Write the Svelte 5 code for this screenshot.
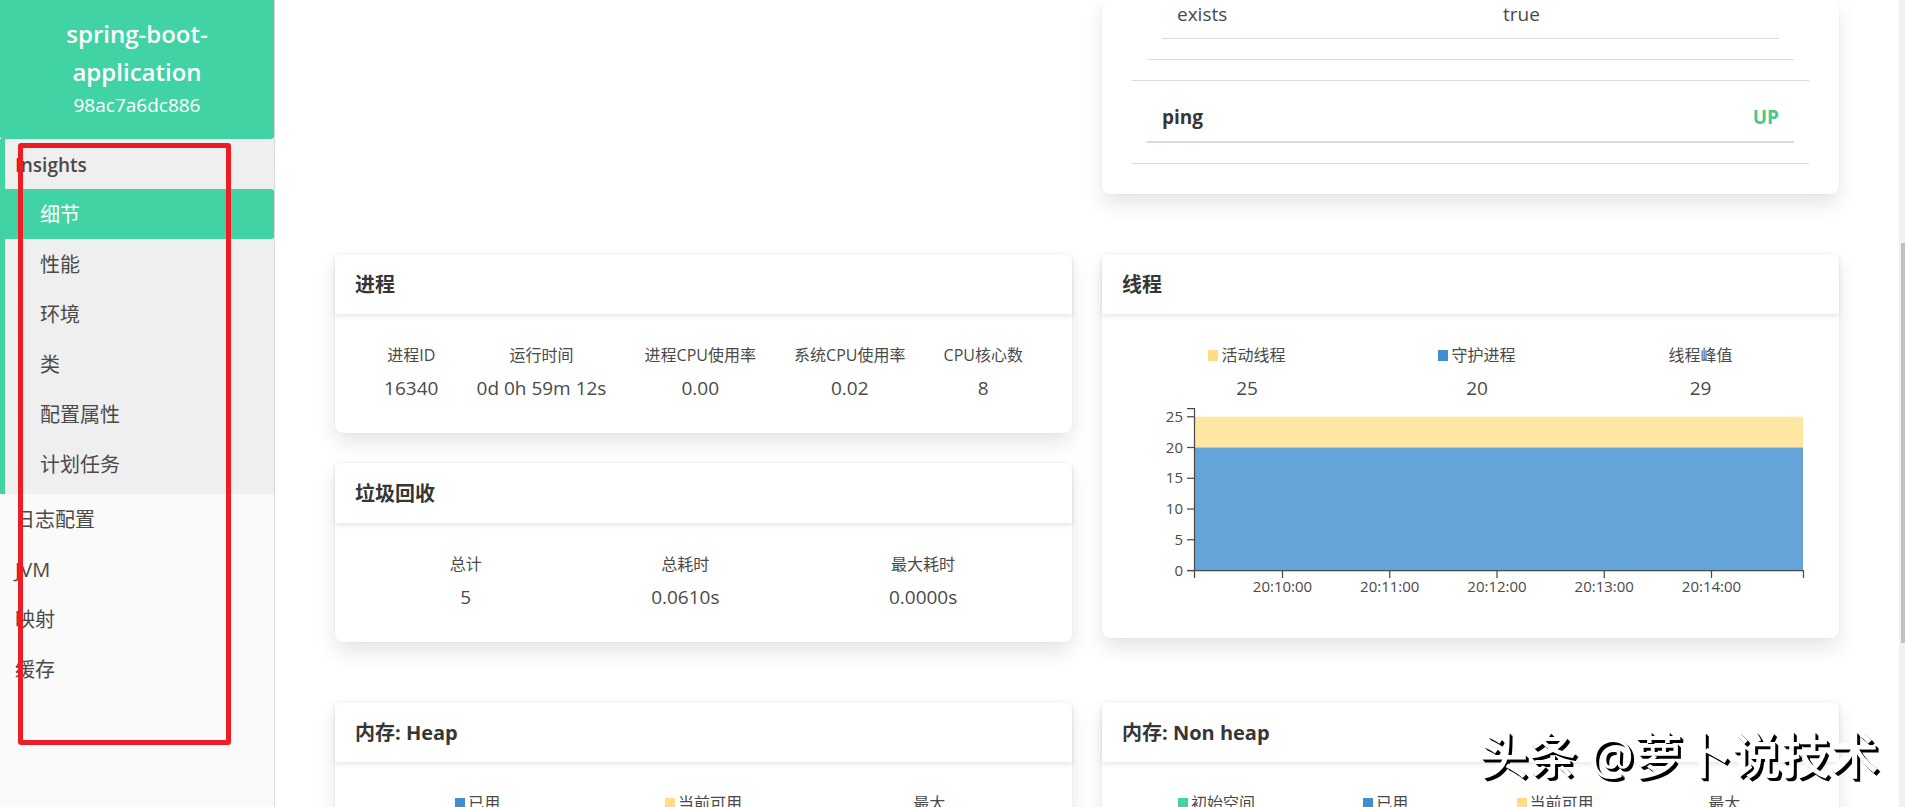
<script lang="ts">
  interface Stat {
    label: string;
    value?: string;
    color?: string;
  }

  const links = ['细节', '性能', '环境', '类', '配置属性', '计划任务'];
  const sections = ['日志配置', 'JVM', '映射', '缓存'];
  const active = '细节';

  const yellow = '#ffdd83';
  const blue = '#3e8ed0';
  const green = '#42d3a5';

  const processStats: Stat[] = [
    { label: '进程ID', value: '16340' },
    { label: '运行时间', value: '0d 0h 59m 12s' },
    { label: '进程CPU使用率', value: '0.00' },
    { label: '系统CPU使用率', value: '0.02' },
    { label: 'CPU核心数', value: '8' },
  ];
  const gcStats: Stat[] = [
    { label: '总计', value: '5' },
    { label: '总耗时', value: '0.0610s' },
    { label: '最大耗时', value: '0.0000s' },
  ];
  const threadStats: Stat[] = [
    { label: '活动线程', value: '25', color: yellow },
    { label: '守护进程', value: '20', color: blue },
    { label: '线程峰值', value: '29' },
  ];
  const heapStats: Stat[] = [
    { label: '已用', color: blue },
    { label: '当前可用', color: yellow },
    { label: '最大' },
  ];
  const nonHeapStats: Stat[] = [
    { label: '初始空间', color: green },
    { label: '已用', color: blue },
    { label: '当前可用', color: yellow },
    { label: '最大' },
  ];

  const yTicks = [0, 5, 10, 15, 20, 25];
  const xTicks = ['20:10:00', '20:11:00', '20:12:00', '20:13:00', '20:14:00'];
  const yPos = (v: number) => 167.5 - v * 6.15;
  const xPos = (i: number) => 150.5 + i * 107.25;
</script>

{#snippet level(stats: Stat[])}
  <div class="level">
    {#each stats as stat}
      <div class="item" class:empty={!stat.value}>
        <p class="heading">
          {#if stat.color}<span class="bullet" style="background: {stat.color}"></span>{/if}{stat.label}
        </p>
        {#if stat.value}<p>{stat.value}</p>{/if}
      </div>
    {/each}
  </div>
{/snippet}

{#snippet panel(title: string, stats: Stat[])}
  <section class="card">
    <header><h2>{title}</h2></header>
    <div class="content">{@render level(stats)}</div>
  </section>
{/snippet}

<div class="app">
  <aside>
    <a class="instance" href="#details">
      <strong>spring-boot-application</strong>
      <span>98ac7a6dc886</span>
    </a>
    <nav>
      <div class="group">
        <a class="title" href="#insights">Insights</a>
        {#each links as link}
          <a class="sub" class:active={link === active} href="#{link}">{link}</a>
        {/each}
      </div>
      {#each sections as section}
        <a href="#{section}">{section}</a>
      {/each}
    </nav>
    <div class="marker"></div>
  </aside>

  <main>
    <div class="row">
      <div></div>
      <section class="card health">
        <div class="outer">
          <div class="inner">
            <table>
              <tbody>
                <tr><td>exists</td><td>true</td></tr>
              </tbody>
            </table>
          </div>
        </div>
        <div class="outer">
          <div class="status"><strong>ping</strong><strong class="up">UP</strong></div>
        </div>
      </section>
    </div>

    <div class="row">
      <div class="column">
        {@render panel('进程', processStats)}
        {@render panel('垃圾回收', gcStats)}
      </div>
      <div class="column">
        <section class="card">
          <header><h2>线程</h2></header>
          <div class="content">
            {@render level(threadStats)}
            <svg class="chart" viewBox="0 0 677 205">
              <rect x="62" y={yPos(25)} width="609" height={yPos(20) - yPos(25)} fill="#ffe6a2" />
              <rect x="62" y={yPos(20)} width="609" height={yPos(0) - yPos(20)} fill="#65a4d9" />
              <path class="axis" d="M55 5.5H62.5V167.5H55M62.5 175V167.5H671.5V175" />
              {#each yTicks as tick}
                <path class="axis" d="M55 {yPos(tick)}H62" />
                <text x="51" y={yPos(tick) + 5} text-anchor="end">{tick}</text>
              {/each}
              {#each xTicks as tick, i}
                <path class="axis" d="M{xPos(i)} 168V175" />
                <text x={xPos(i)} y="189" text-anchor="middle">{tick}</text>
              {/each}
            </svg>
          </div>
        </section>
      </div>
    </div>

    <div class="row">
      {@render panel('内存: Heap', heapStats)}
      {@render panel('内存: Non heap', nonHeapStats)}
    </div>
  </main>

  <div class="scrollbar"><div class="thumb"></div></div>
  <div class="watermark">头条 @萝卜说技术</div>
</div>

<style>
  :global(body) {
    overflow: hidden;
  }
  .app {
    position: relative;
    display: flex;
    height: 100vh;
    overflow: hidden;
    background: #fff;
    color: #4a4a4a;
    font: 19px/30px 'Open Sans', 'Noto Sans CJK SC', sans-serif;
  }
  h2,
  p {
    margin: 0;
  }
  a {
    color: inherit;
    text-decoration: none;
  }
  aside {
    position: relative;
    box-sizing: border-box;
    flex: none;
    width: 275px;
    border-right: 1px solid #dbdbdb;
    background: #fafafa;
  }
  .instance {
    display: flex;
    flex-direction: column;
    padding: 15px 50px 19px;
    border-radius: 0 0 3px 3px;
    background: #42d3a5;
    color: #fff;
    text-align: center;
  }
  .instance strong {
    font-size: 24px;
    font-weight: 600;
    line-height: 38px;
  }
  .instance span {
    line-height: 29px;
  }
  nav a {
    display: block;
    padding: 10px 15px;
    font-size: 20px;
  }
  .group {
    margin-bottom: 1px;
    padding-bottom: 5px;
    border-left: 5px solid #42d3a5;
    background: #efefef;
  }
  .group a {
    padding: 11px 10px 9px;
  }
  .group .title {
    font-size: 19px;
    font-weight: 600;
  }
  .group .sub {
    padding-left: 35px;
  }
  .group .active {
    border-radius: 0 3px 3px 0;
    background: #42d3a5;
    color: #fff;
  }
  .marker {
    position: absolute;
    top: 143px;
    left: 18px;
    box-sizing: border-box;
    width: 213px;
    height: 602px;
    border: 5px solid #ee1c25;
    border-radius: 3px;
  }
  main {
    flex: 1;
    padding: 0 60px;
  }
  .row {
    display: grid;
    grid-template-columns: 1fr 1fr;
    gap: 30px;
    align-items: start;
    margin-bottom: 60px;
  }
  .column {
    display: flex;
    flex-direction: column;
    gap: 30px;
  }
  .card {
    border-radius: 8px;
    background: #fff;
    box-shadow:
      0 10px 20px rgba(10, 10, 10, 0.1),
      0 0 0 1px rgba(10, 10, 10, 0.02);
  }
  header {
    padding: 16px 20px 14px;
    box-shadow: 0 2px 5px rgba(10, 10, 10, 0.1);
  }
  h2 {
    color: #363636;
    font-size: 20px;
    font-weight: 700;
  }
  .content {
    padding: 30px;
  }
  .level {
    display: flex;
    align-items: center;
  }
  .item {
    flex: 1 0 auto;
    text-align: center;
  }
  .item.empty {
    flex: 1 1 0;
  }
  .heading {
    margin-bottom: 7px;
    font-size: 16px;
    line-height: 22px;
  }
  .bullet {
    display: inline-block;
    width: 10px;
    height: 11px;
    margin-right: 3px;
  }
  .chart {
    display: block;
    width: 100%;
  }
  .axis {
    fill: none;
    stroke: #4a4a4a;
    stroke-width: 1.25;
  }
  .chart text {
    fill: #4a4a4a;
    font-size: 15px;
  }
  .health {
    padding: 0 30px 30px;
  }
  .outer,
  .inner {
    padding: 0 15px 20px;
    border-bottom: 1px solid #dbdbdb;
  }
  table {
    width: 100%;
    border-collapse: collapse;
    table-layout: fixed;
  }
  td {
    padding: 0 15px 10px;
    border-bottom: 1px solid #dbdbdb;
    line-height: 28px;
  }
  td:first-child {
    width: 296px;
  }
  .status {
    display: flex;
    justify-content: space-between;
    padding: 21px 15px 9px;
    border-bottom: 2px solid #dbdbdb;
    color: #363636;
  }
  .status .up {
    color: #48c78e;
  }
  .scrollbar {
    flex: none;
    width: 6px;
    padding-top: 243px;
    background: #f1f1f1;
  }
  .thumb {
    height: 400px;
    margin-left: 2px;
    background: #c1c1c1;
  }
  .watermark {
    position: absolute;
    right: 26px;
    bottom: 22px;
    color: #fff;
    font-size: 49px;
    font-weight: 500;
    line-height: 60px;
    text-shadow:
      1px 1px 0 #000,
      2px 2px 0 #000,
      3px 3px 0 #000,
      -2px -2px 2px #fff;
  }
</style>
